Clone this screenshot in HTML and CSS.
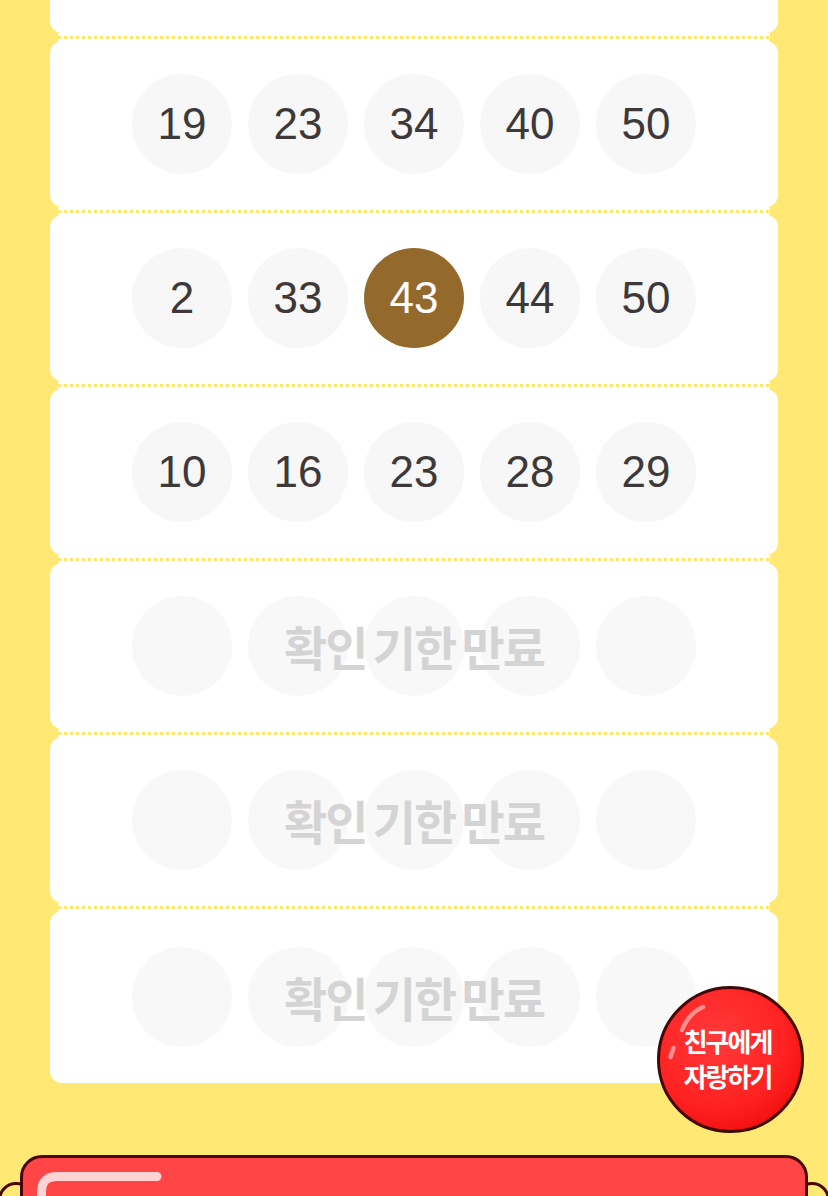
FILE: index.html
```html
<!DOCTYPE html>
<html lang="ko">
<head>
<meta charset="utf-8">
<title>번호 확인</title>
<link rel="stylesheet" href="styles.css">
</head>
<body>
<div class="page">
  <div class="ticket">
    <div class="row">
      <span class="ball"></span><span class="ball gold"></span><span class="ball"></span><span class="ball"></span><span class="ball"></span>
    </div>
    <div class="sep"></div>
    <div class="row">
      <span class="ball">19</span><span class="ball">23</span><span class="ball">34</span><span class="ball">40</span><span class="ball">50</span>
    </div>
    <div class="sep"></div>
    <div class="row">
      <span class="ball">2</span><span class="ball">33</span><span class="ball hit">43</span><span class="ball">44</span><span class="ball">50</span>
    </div>
    <div class="sep"></div>
    <div class="row">
      <span class="ball">10</span><span class="ball">16</span><span class="ball">23</span><span class="ball">28</span><span class="ball">29</span>
    </div>
    <div class="sep"></div>
    <div class="row expired">
      <span class="ball"></span><span class="ball"></span><span class="ball"></span><span class="ball"></span><span class="ball"></span>
      <span class="expired-label">확인 기한 만료</span>
    </div>
    <div class="sep"></div>
    <div class="row expired">
      <span class="ball"></span><span class="ball"></span><span class="ball"></span><span class="ball"></span><span class="ball"></span>
      <span class="expired-label">확인 기한 만료</span>
    </div>
    <div class="sep"></div>
    <div class="row expired last">
      <span class="ball"></span><span class="ball"></span><span class="ball"></span><span class="ball"></span><span class="ball"></span>
      <span class="expired-label">확인 기한 만료</span>
    </div>
  </div>

  <div class="bar">
    <span class="ear ear-left"></span>
    <span class="ear ear-right"></span>
    <div class="bar-face">
      <svg class="bar-shine" width="140" height="60" viewBox="0 0 140 60">
        <path d="M 120 4.5 H 20 Q 4.5 4.5 4.5 20 V 70" fill="none" stroke="#FFD2D4" stroke-width="9" stroke-linecap="round"/>
      </svg>
    </div>
  </div>

  <button class="brag" type="button">
    <svg class="brag-shine" width="147" height="147" viewBox="0 0 147 147">
      <path d="M 46 21 Q 32 27 25 44" fill="none" stroke="#FF8E8E" stroke-width="4.5" stroke-linecap="round"/>
      <path d="M 16.5 62 L 13.5 71" fill="none" stroke="#FF8E8E" stroke-width="4.5" stroke-linecap="round"/>
    </svg>
    <span class="brag-text">친구에게<br>자랑하기</span>
  </button>
</div>
</body>
</html>
```

FILE: styles.css
```css
html, body {
  margin: 0;
  padding: 0;
}

body {
  background: #FFE873;
  font-family: "Liberation Sans", Arial, sans-serif;
  overflow: hidden;
}

.page {
  position: relative;
  display: flow-root;
  min-height: 1196px;
}

.ticket {
  width: 728px;
  margin: -133px 0 0 50px;
  display: flex;
  flex-direction: column;
}

.row {
  position: relative;
  height: 166px;
  background: #FFFFFF;
  border-radius: 12px;
  display: flex;
  align-items: center;
  justify-content: center;
  gap: 16px;
}

.row.last {
  height: 172px;
}

.sep {
  height: 8px;
  margin: 0 8px;
  background-color: #FFFFFF;
  background-image: repeating-linear-gradient(90deg, #FFE56E 0 3px, transparent 3px 6px);
  background-size: 100% 3px;
  background-position: 0 center;
  background-repeat: no-repeat;
}

.ball {
  width: 100px;
  height: 100px;
  border-radius: 50%;
  background: #F7F7F7;
  color: #3E3939;
  font-size: 44px;
  display: flex;
  align-items: center;
  justify-content: center;
  line-height: 1;
}

.ball.hit {
  background: #946A2C;
  color: #FFFFFF;
}

.ball.gold {
  background: #DCA73E;
}

.expired .ball {
  background: #F8F8F8;
}

.expired-label {
  position: absolute;
  left: 0;
  right: 0;
  top: 50%;
  transform: translateY(-52%);
  text-align: center;
  font-family: "Noto Sans CJK KR", "Noto Sans", sans-serif;
  font-weight: 700;
  font-size: 47px;
  letter-spacing: -2px;
  word-spacing: -5px;
  color: #D4D4D4;
  line-height: 1;
}

.bar {
  position: relative;
  margin: 72px 20px 0;
  height: 120px;
}

.bar-face {
  position: relative;
  z-index: 2;
  height: 100%;
  box-sizing: border-box;
  background: #FF4545;
  border: 3.5px solid #4A0606;
  border-radius: 22px;
}

.bar-shine {
  position: absolute;
  left: 14px;
  top: 14px;
  display: block;
}

.ear {
  position: absolute;
  z-index: 1;
  top: 27px;
  width: 36px;
  height: 36px;
  box-sizing: border-box;
  border-radius: 50%;
  border: 3.5px solid #4A0606;
  background: #FFE873;
}

.ear-left {
  left: -22px;
}

.ear-right {
  right: -22px;
}

.brag {
  position: absolute;
  left: 657px;
  top: 986px;
  width: 147px;
  height: 147px;
  padding: 0;
  box-sizing: border-box;
  border: 3.5px solid #420808;
  border-radius: 50%;
  background: radial-gradient(circle at 40% 35%, #FF3A3A 0%, #FF2222 55%, #F20E0E 80%, #D90606 100%);
  display: flex;
  align-items: center;
  justify-content: center;
  cursor: pointer;
}

.brag-shine {
  position: absolute;
  left: -3.5px;
  top: -3.5px;
}

.brag-text {
  position: relative;
  font-family: "Noto Sans CJK KR", "Noto Sans", sans-serif;
  font-weight: 700;
  font-size: 26px;
  letter-spacing: -2px;
  line-height: 35px;
  color: #FFFFFF;
  text-align: center;
  margin-right: 6px;
  margin-top: -4px;
}
```
